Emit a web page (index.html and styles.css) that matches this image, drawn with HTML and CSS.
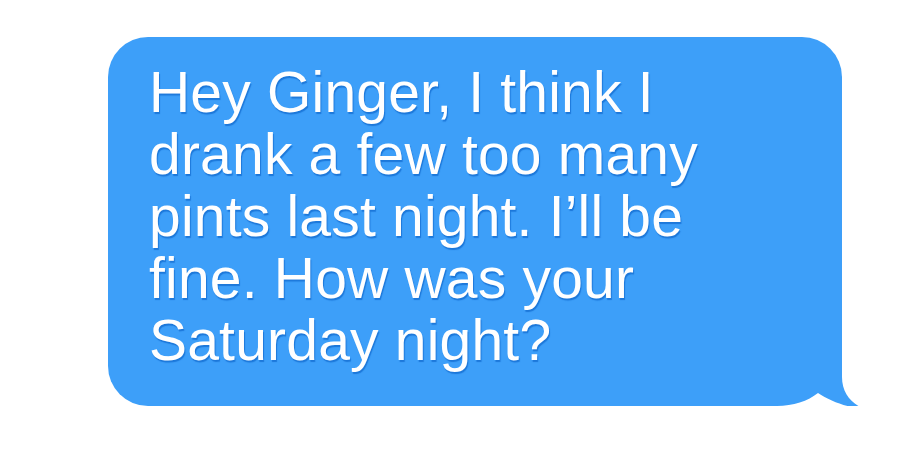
FILE: index.html
```html
<!DOCTYPE html>
<html lang="en">
<head>
  <meta charset="UTF-8">
  <title>Message</title>
  <link rel="stylesheet" href="styles.css">
</head>
<body>
  <div class="bubble">
    <p class="bubble-text">Hey Ginger, I think I drank a few too many pints last night. I’ll be fine. How was your Saturday night?</p>
    <svg class="tail" width="100" height="45" viewBox="0 0 100 45">
      <rect x="2" y="2" width="74" height="39" fill="#ffffff"/>
      <path d="M74,0 L74,10 C74,25 82,35 94,41 C80,41 62,34 50,26 C40,34 25,39 9,39 L0,39 L0,0 Z" fill="#3d9ff9"/>
    </svg>
  </div>
</body>
</html>
```

FILE: styles.css
```css
body {
  margin: 0;
  background-color: #ffffff;
  font-family: "Liberation Sans", Arial, sans-serif;
}

.bubble {
  position: relative;
  box-sizing: border-box;
  width: 734px;
  height: 369px;
  margin: 37px 0 0 108px;
  padding: 24px 40px 35px 41px;
  background-color: #3d9ff9;
  border-radius: 40px;
  border-bottom-right-radius: 0;
}

.bubble-text {
  margin: 0;
  width: 610px;
  color: #ffffff;
  font-size: 57px;
  line-height: 62px;
  letter-spacing: 0.2px;
  text-shadow: 1px 2px 1px rgba(20, 110, 210, 0.8);
}

/* tail in the bottom right corner */
.tail {
  position: absolute;
  right: -26px;
  bottom: -6px;
}
```
